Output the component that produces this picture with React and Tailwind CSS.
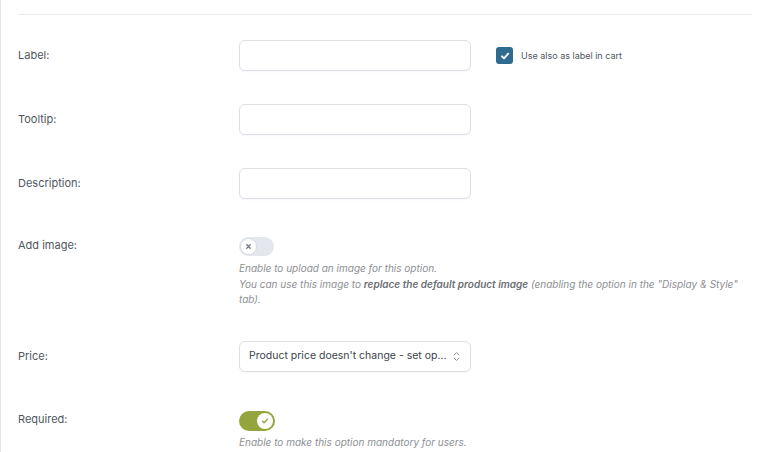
import React, { useState } from 'react';

const Row = ({ label, className, children }) => (
  <div className={`flex ${className}`}>
    <div className="w-[238px] shrink-0 pl-[17px] text-[11px] text-[#50575e]">{label}</div>
    <div className="flex-1">{children}</div>
  </div>
);

const TextInput = () => (
  <input
    type="text"
    className="h-[31px] w-[232px] rounded-[6px] border border-[#dcdfe6] bg-white px-2 text-[12px] shadow-[0_1px_2px_rgba(0,0,0,0.04)] outline-none"
  />
);

const Toggle = ({ on, onClick }) =>
  on ? (
    <button
      onClick={onClick}
      className="flex h-[20px] w-[36px] items-center justify-end rounded-full bg-[#94a53d] pr-[2px]"
    >
      <span className="flex h-[16px] w-[16px] items-center justify-center rounded-full bg-white">
        <svg width="8" height="8" viewBox="0 0 10 10" fill="none">
          <path d="M2 5.2l2 2 4-4.4" stroke="#94a53d" strokeWidth="1.8" strokeLinecap="round" strokeLinejoin="round" />
        </svg>
      </span>
    </button>
  ) : (
    <button
      onClick={onClick}
      className="flex h-[19px] w-[35px] items-center rounded-full bg-[#e4e7ed] pl-[1px]"
    >
      <span className="flex h-[17px] w-[17px] items-center justify-center rounded-full border border-[#d6dae1] bg-white">
        <svg width="7" height="7" viewBox="0 0 10 10" fill="none">
          <path d="M2.5 2.5l5 5M7.5 2.5l-5 5" stroke="#6b7280" strokeWidth="1.8" strokeLinecap="round" />
        </svg>
      </span>
    </button>
  );

const App = () => {
  const [useInCart, setUseInCart] = useState(true);
  const [addImage, setAddImage] = useState(false);
  const [required, setRequired] = useState(true);

  return (
    <div
      className="min-h-screen border-l border-[#e5e5e5] bg-white"
      style={{ fontFamily: 'Inter, "Noto Sans", sans-serif' }}
    >
      <div className="pl-[17px] pr-[17px] pt-[14px]">
        <div className="h-px bg-[#ebebeb]" />
      </div>

      <Row label="Label:" className="mt-[25px] items-center">
        <div className="flex items-center">
          <TextInput />
          <button
            onClick={() => setUseInCart(!useInCart)}
            className={`ml-[25px] flex h-[17px] w-[17px] items-center justify-center rounded-[3px] ${useInCart ? 'bg-[#2e6b8e]' : 'border border-[#c3c4c7] bg-white'}`}
          >
            {useInCart && (
              <svg width="10" height="10" viewBox="0 0 10 10" fill="none">
                <path d="M2 5.3l2 2 4.2-4.6" stroke="white" strokeWidth="1.9" strokeLinecap="round" strokeLinejoin="round" />
              </svg>
            )}
          </button>
          <span className="ml-[8px] text-[9px] text-[#50575e]">Use also as label in cart</span>
        </div>
      </Row>

      <Row label="Tooltip:" className="mt-[33px] items-center">
        <TextInput />
      </Row>

      <Row label="Description:" className="mt-[33px] items-center">
        <TextInput />
      </Row>

      <Row label="Add image:" className="mt-[38px]">
        <div>
          <Toggle on={addImage} onClick={() => setAddImage(!addImage)} />
          <p className="mt-[5px] text-[10px] italic leading-[15.5px] text-[#8c8f94]">
            Enable to upload an image for this option.
            <br />
            You can use this image to <b className="font-semibold text-[#6b6f75]">replace the default product image</b> (enabling the option in the "Display &amp; Style"
            <br />
            tab).
          </p>
        </div>
      </Row>

      <Row label="Price:" className="mt-[33px] items-center">
        <div className="flex h-[31px] w-[232px] items-center justify-between rounded-[6px] border border-[#dcdfe6] bg-white pl-[9px] pr-[10px] text-[10.5px] text-[#3c434a] shadow-[0_1px_2px_rgba(0,0,0,0.04)]">
          <span className="whitespace-nowrap">Product price doesn't change - set op...</span>
          <svg width="7" height="11" viewBox="0 0 7 11" fill="none" className="ml-1 shrink-0">
            <path d="M1 4l2.5-2.5L6 4M1 7l2.5 2.5L6 7" stroke="#8c8f94" strokeWidth="1" strokeLinecap="round" strokeLinejoin="round" />
          </svg>
        </div>
      </Row>

      <Row label="Required:" className="mt-[39px]">
        <div>
          <Toggle on={required} onClick={() => setRequired(!required)} />
          <p className="mt-[4px] text-[10px] italic leading-[15px] text-[#8c8f94]">
            Enable to make this option mandatory for users.
          </p>
        </div>
      </Row>
    </div>
  );
};

export default App;
